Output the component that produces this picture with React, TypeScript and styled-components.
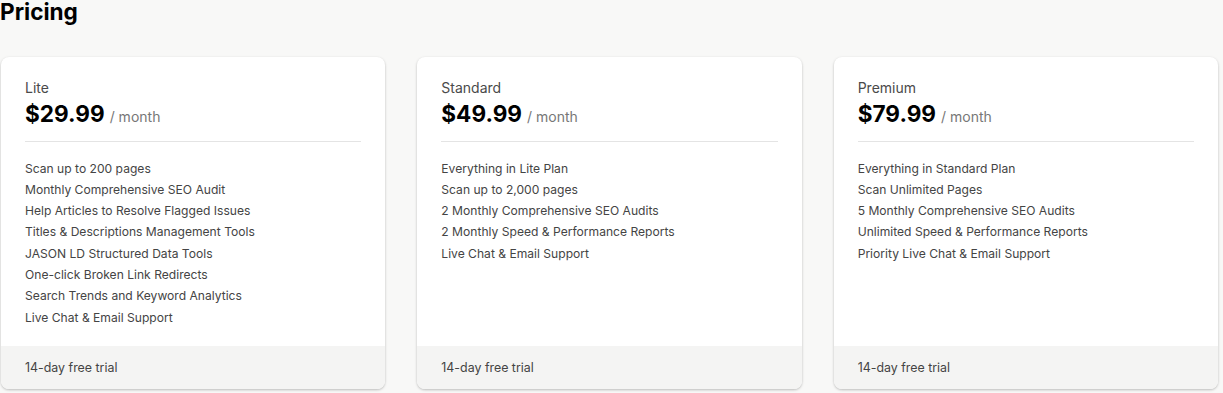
import styled, { createGlobalStyle } from "styled-components";

const plans = [
  {
    name: "Lite",
    price: "$29.99",
    features: [
      "Scan up to 200 pages",
      "Monthly Comprehensive SEO Audit",
      "Help Articles to Resolve Flagged Issues",
      "Titles & Descriptions Management Tools",
      "JASON LD Structured Data Tools",
      "One-click Broken Link Redirects",
      "Search Trends and Keyword Analytics",
      "Live Chat & Email Support",
    ],
  },
  {
    name: "Standard",
    price: "$49.99",
    features: [
      "Everything in Lite Plan",
      "Scan up to 2,000 pages",
      "2 Monthly Comprehensive SEO Audits",
      "2 Monthly Speed & Performance Reports",
      "Live Chat & Email Support",
    ],
  },
  {
    name: "Premium",
    price: "$79.99",
    features: [
      "Everything in Standard Plan",
      "Scan Unlimited Pages",
      "5 Monthly Comprehensive SEO Audits",
      "Unlimited Speed & Performance Reports",
      "Priority Live Chat & Email Support",
    ],
  },
];

const GlobalStyle = createGlobalStyle`
  body {
    margin: 0;
    background: #f8f8f7;
    font-family: Inter, "Noto Sans", sans-serif;
    color: #111;
  }
`;

const Page = styled.main`
  padding: 0 5px 4px 1px;
`;

const Title = styled.h1`
  margin: 0 0 33px -1px;
  font-size: 22.6px;
  line-height: 24px;
  font-weight: 700;
  color: #000;
`;

const Grid = styled.div`
  display: grid;
  grid-template-columns: repeat(3, 1fr);
  gap: 32px;
`;

const Card = styled.section`
  display: flex;
  flex-direction: column;
  background: #fff;
  border-radius: 8px;
  box-shadow: 0 1px 3px rgba(0, 0, 0, 0.18), 0 1px 2px rgba(0, 0, 0, 0.08);
  overflow: hidden;
`;

const Body = styled.div`
  flex: 1;
  padding: 22px 24px 18px;
`;

const PlanName = styled.div`
  font-size: 14px;
  line-height: 18px;
  color: #4a4a4a;
`;

const PriceRow = styled.div`
  display: flex;
  align-items: baseline;
  gap: 5px;
  margin-top: 2px;
  padding-bottom: 12px;
  border-bottom: 1px solid #e4e4e4;
`;

const Price = styled.span`
  font-size: 22.6px;
  line-height: 30px;
  font-weight: 700;
  color: #000;
`;

const Period = styled.span`
  font-size: 14px;
  color: #777;
`;

const Features = styled.ul`
  list-style: none;
  margin: 15.5px 0 0;
  padding: 0;
`;

const Feature = styled.li`
  font-size: 12.1px;
  line-height: 21.3px;
  color: #444;
`;

const Footer = styled.div`
  background: #f4f4f3;
  padding: 12px 24px;
  font-size: 12.4px;
  line-height: 19px;
  color: #444;
`;

export default function App() {
  return (
    <>
      <GlobalStyle />
      <Page>
        <Title>Pricing</Title>
        <Grid>
          {plans.map((plan) => (
            <Card key={plan.name}>
              <Body>
                <PlanName>{plan.name}</PlanName>
                <PriceRow>
                  <Price>{plan.price}</Price>
                  <Period>/ month</Period>
                </PriceRow>
                <Features>
                  {plan.features.map((f) => (
                    <Feature key={f}>{f}</Feature>
                  ))}
                </Features>
              </Body>
              <Footer>14-day free trial</Footer>
            </Card>
          ))}
        </Grid>
      </Page>
    </>
  );
}
